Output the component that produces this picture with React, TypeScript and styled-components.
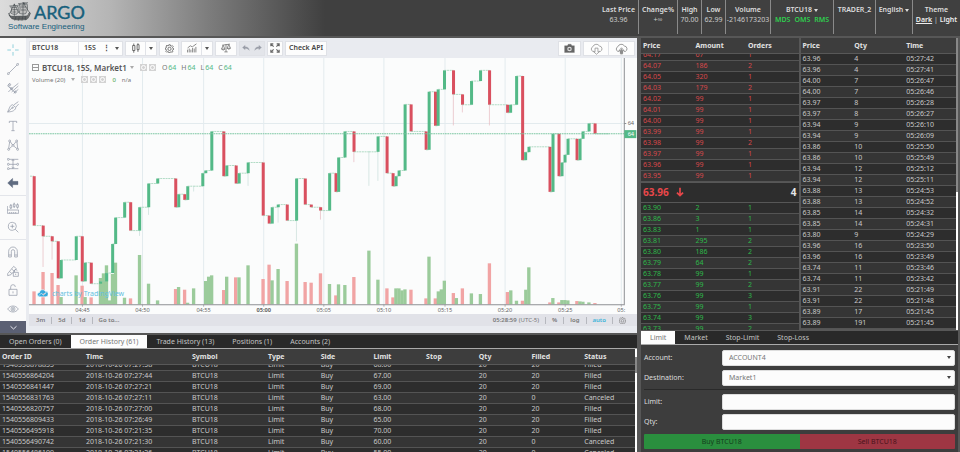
import React, { useLayoutEffect, useRef } from "react";
import styled, { createGlobalStyle, css } from "styled-components";

const Global = createGlobalStyle`
  * { box-sizing: border-box; }
  body { margin: 0; background: #555; }
  button, input, select, table { font: inherit; color: inherit; }
  button { border: 0; background: none; padding: 0; cursor: pointer; }
`;

const App_ = styled.div`
  display: flex;
  flex-direction: column;
  height: 100vh;
  background: #575757;
  color: #ddd;
  font: 7px/10px "Noto Sans", "Open Sans", sans-serif;
`;

/* ---------- header ---------- */

const Header = styled.header`
  display: flex;
  justify-content: space-between;
  height: 36px;
  flex: none;
  background: linear-gradient(90deg, #dcdcdc 0, #b5b5b5 110px, #7c7c7c 210px, #404040 325px);
`;

const Brand = styled.a`
  display: grid;
  grid-template-columns: 26px auto;
  align-content: start;
  padding: 2px 8px;
  color: #17607c;
  text-decoration: none;
  white-space: nowrap;
`;

const BrandName = styled.span`
  font: 18px/20px Lato, sans-serif;
  -webkit-text-stroke: 0.4px #17607c;
`;

const BrandLine = styled.span`
  grid-column: 1 / -1;
  font: 8px/9px "Liberation Sans", Arial, sans-serif;
`;

const Stats = styled.div`
  display: flex;
  height: 34px;
`;

const Stat = styled.div<{ $w: number }>`
  display: flex;
  flex-direction: column;
  align-items: center;
  width: ${(p) => p.$w}px;
  padding-top: 5px;
  color: #ccc;
  white-space: nowrap;
  & + & { border-left: 1px solid #8a8a8a; }
`;

const StatName = styled.strong`
  color: #ddd;
  font-weight: 600;
`;

const Services = styled.span`
  display: flex;
  gap: 4px;
  color: #2fd04f;
  font-weight: 600;
`;

const MenuButton = styled.button`
  display: flex;
  align-items: center;
  gap: 2px;
  color: #ddd;
  font-weight: 600;
`;

const Caret = styled.i<{ $tone?: string }>`
  width: 0;
  height: 0;
  border: 2px solid transparent;
  border-top: 3px solid ${(p) => p.$tone ?? "#ddd"};
  border-bottom: 0;
`;

const ThemeButton = styled.button<{ $on?: boolean }>`
  font-weight: 600;
  color: #eee;
  text-decoration: ${(p) => (p.$on ? "underline" : "none")};
`;

/* ---------- frame ---------- */

const Main = styled.main`
  flex: 1;
  min-height: 0;
  display: grid;
  grid-template-columns: minmax(0, 638fr) minmax(0, 322fr);
  padding-top: 2px;
`;

const Left = styled.div`
  display: flex;
  flex-direction: column;
  gap: 2px;
  min-height: 0;
  margin-right: 1px;
`;

const Right = styled.div`
  display: flex;
  flex-direction: column;
  gap: 1px;
  min-height: 0;
  padding: 0 2px 0 3px;
`;

/* ---------- chart panel ---------- */

const ChartPanel = styled.section`
  display: grid;
  grid-template-columns: 29px minmax(0, 1fr);
  flex: none;
  background: #e9ebf0;
  color: #4c525e;
`;

const ToolRail = styled.div`
  display: flex;
  flex-direction: column;
  justify-content: space-between;
  width: 26px;
  background: #fbfbfb;
`;

const ToolGroup = styled.div`
  display: flex;
  flex-direction: column;
  align-items: center;
  gap: 7px;
  padding: 6px 0;
  & + & { border-top: 1px solid #e3e5ea; }
`;

const ToolButton = styled.button`
  width: 12px;
  height: 12px;
  svg { display: block; }
`;

const RailToggle = styled.button`
  height: 12px;
  display: flex;
  align-items: center;
  justify-content: center;
  background: #5b6073;
`;

const Toolbar = styled.div`
  display: flex;
  align-items: center;
  gap: 2px;
  height: 20px;
  padding: 0 2px 0 0;
`;

const ButtonSet = styled.div<{ $muted?: boolean }>`
  display: flex;
  height: 15px;
  border: 1px solid #dfe1e6;
  background: ${(p) => (p.$muted ? "#e3e5ea" : "#fdfdfd")};
`;

const BarButton = styled.button<{ $w: number; $start?: boolean; $line?: boolean }>`
  display: flex;
  align-items: center;
  justify-content: ${(p) => (p.$start ? "flex-start" : "center")};
  width: ${(p) => p.$w}px;
  padding: 0 2px;
  font-weight: 600;
  color: #444;
  white-space: nowrap;
  ${(p) => p.$line && css`border-right: 1px solid #e1e3e8;`}
`;

const Push = styled.div`
  flex: 1;
`;

const Plot = styled.div`
  position: relative;
  margin-right: 0;
  background: #fbfcfc;
  svg.plot { display: block; width: 100%; height: auto; }
`;

const Legend = styled.div`
  position: absolute;
  left: 3px;
  top: 4px;
  display: grid;
  gap: 1px;
`;

const LegendRow = styled.div`
  display: flex;
  align-items: center;
  gap: 3px;
  height: 11px;
  white-space: nowrap;
`;

const Collapse = styled.button`
  width: 7px;
  height: 7px;
  border: 1px solid #999;
  display: flex;
  align-items: center;
  &::after { content: ""; flex: 1; height: 1px; background: #999; }
`;

const Symbol = styled.strong`
  font-size: 8px;
  font-weight: 600;
  color: #555;
`;

const Chips = styled.span`
  display: flex;
  gap: 2px;
  margin: 0 3px;
`;

const Chip = styled.button`
  width: 7px;
  height: 7px;
  background: #d3d3d3;
  display: flex;
  align-items: center;
  justify-content: center;
  &::after { content: ""; width: 3px; height: 3px; border: 1px solid #fff; border-radius: 50%; }
`;

const Ohlc = styled.span`
  margin-right: 2px;
  color: #777;
  b { color: #53b987; font-weight: 400; margin-left: 1px; }
`;

const Small = styled.span<{ $tone?: string }>`
  font-size: 6px;
  margin-right: 3px;
  color: ${(p) => p.$tone ?? "#777"};
`;

const Watermark = styled.a`
  position: absolute;
  left: 8px;
  bottom: 15px;
  display: flex;
  align-items: center;
  gap: 4px;
  color: #62bfdf;
  text-decoration: none;
`;

const RangeBar = styled.div`
  display: flex;
  align-items: center;
  height: 12px;
  padding: 0 5px 0 1px;
  background: #e1e2e8;
  font-size: 6px;
`;

const RangeButton = styled.button<{ $active?: boolean }>`
  display: flex;
  align-items: center;
  justify-content: center;
  height: 7px;
  line-height: 7px;
  padding: 0 6px;
  font-weight: 600;
  color: ${(p) => (p.$active ? "#3bb3d8" : "#777")};
  & + & { border-left: 1px solid #b6b8be; }
`;

const Clock = styled(RangeButton)`
  span { font-weight: 400; margin-left: 2px; }
`;

/* ---------- tables ---------- */

const Panel = styled.section<{ $grow?: boolean; $basis?: number }>`
  display: flex;
  flex-direction: column;
  min-height: 0;
  min-width: 0;
  flex: ${(p) => (p.$grow ? `1 1 ${p.$basis ?? 0}px` : "none")};
`;

const Tabs = styled.div`
  display: flex;
  flex: none;
  height: 14px;
  background: #292929;
  border-bottom: 1px solid #aaa;
`;

const Tab = styled.button<{ $on?: boolean }>`
  padding: 0 9px;
  white-space: nowrap;
  color: ${(p) => (p.$on ? "#777" : "#c4c4c4")};
  background: ${(p) => (p.$on ? "#fdfdfd" : "none")};
`;

const ScrollRow = styled.div`
  display: flex;
  flex: 1;
  min-height: 0;
`;

const Viewport = styled.div`
  flex: 1;
  min-width: 0;
  overflow: hidden;
`;

const Track = styled.div<{ $thumb: string; $bar: string }>`
  width: 2px;
  flex: none;
  background: linear-gradient(${(p) => p.$bar}) #fff;
`;

const Table = styled.table<{ $tone?: string }>`
  width: 100%;
  table-layout: fixed;
  border-collapse: separate;
  border-spacing: 0;
  text-align: left;
  white-space: nowrap;
  color: ${(p) => p.$tone ?? "#c9c9c9"};
  th {
    position: sticky;
    top: 0;
    height: 16px;
    padding: 0 2px;
    background: #3d3d3d;
    border-bottom: 1px solid #585858;
    color: #e2e2e2;
    font-weight: 700;
  }
  td {
    height: 11px;
    line-height: 10px;
    padding: 0 2px;
    border-bottom: 1px solid #545454;
    background: #2d2d2d;
  }
  tr:nth-child(even) td { background: #353535; }
`;

const Col = styled.col<{ $w: number }>`
  width: ${(p) => p.$w}px;
`;

type GridProps = {
  label: string;
  head?: string[];
  rows: string[][];
  widths?: number[];
  scroll?: number;
  tone?: string;
};

function DataGrid({ label, head, rows, widths, scroll = 0, tone }: GridProps) {
  const ref = useRef<HTMLDivElement>(null);
  useLayoutEffect(() => {
    if (ref.current) ref.current.scrollTop = scroll;
  }, [scroll]);
  return (
    <Viewport ref={ref}>
      <Table $tone={tone} aria-label={label}>
        {widths && (
          <colgroup>
            {widths.map((w, i) => <Col key={i} $w={w} />)}
          </colgroup>
        )}
        {head && (
          <thead>
            <tr>{head.map((h) => <th key={h} scope="col">{h}</th>)}</tr>
          </thead>
        )}
        <tbody>
          {rows.map((r, i) => (
            <tr key={i}>{r.map((c, j) => <td key={j}>{c}</td>)}</tr>
          ))}
        </tbody>
      </Table>
    </Viewport>
  );
}

const Books = styled.div`
  flex: 1;
  min-height: 0;
  display: grid;
  grid-template-columns: minmax(0, 1fr) minmax(0, 1fr);
  grid-template-rows: minmax(0, 1fr);
  gap: 2px;
`;

const LastTrade = styled.div`
  display: flex;
  align-items: center;
  flex: none;
  gap: 6px;
  height: 19px;
  margin: 1px 0;
  padding: 0 2px;
  background: #2d2d2d;
  font-size: 10px;
  font-weight: 700;
  color: #e8474a;
  span { margin-left: auto; color: #e6e6e6; }
`;

/* ---------- order form ---------- */

const Form = styled.form`
  display: flex;
  flex-direction: column;
  gap: 4px;
  padding: 5px 3px 3px;
  background: #3d3d3d;
`;

const Field = styled.div`
  display: grid;
  grid-template-columns: 78px minmax(0, 1fr);
  align-items: center;
  position: relative;
  height: 16px;
`;

const box = css`
  width: 100%;
  height: 16px;
  padding: 0 6px;
  border: 1px solid #ddd;
  border-radius: 2px;
  background: #fcfcfc;
  color: #777;
`;

const Select = styled.select`
  ${box}
  appearance: none;
`;

const Input = styled.input`
  ${box}
`;

const SelectCaret = styled(Caret)`
  position: absolute;
  right: 4px;
  top: 6px;
  pointer-events: none;
`;

const Rule = styled.hr`
  width: 100%;
  height: 1px;
  margin: -1px 0 0;
  border: 0;
  background: #2a2a2a;
`;

const Actions = styled.div`
  display: grid;
  grid-template-columns: 1fr 1fr;
  border-radius: 1px;
  overflow: hidden;
`;

const Action = styled.button<{ $tone: string; $ink: string }>`
  height: 15px;
  background: ${(p) => p.$tone};
  color: ${(p) => p.$ink};
`;

/* ---------- icons ---------- */

function Glyph({ d, color = "#8b93a1", w = 2, size = 12, fill = "none" }: { d: string; color?: string; w?: number; size?: number; fill?: string }) {
  return (
    <svg width={size} height={size} viewBox="0 0 36 36" fill={fill} stroke={color} strokeWidth={w} aria-hidden>
      <path d={d} />
    </svg>
  );
}

const dot = (x: number, y: number, r = 3) => `M${x - r} ${y}a${r} ${r} 0 1 0 ${2 * r} 0a${r} ${r} 0 1 0 ${-2 * r} 0`;

const tools: { name: string; d: string; color?: string; w?: number; fill?: string }[][] = [
  [
    { name: "Cross", d: "M18 1v11M18 24v11M1 18h11M24 18h11", color: "#5bbccb" },
    { name: "Trend line", d: `${dot(4, 32)}${dot(32, 4)}M6 30L30 6` },
    { name: "Pitchfork", d: `M8 4L2 12L14 20L34 4M14 20L4 30M14 30L34 12M20 34L34 22M6 14L24 32${dot(8, 8)}${dot(25, 30)}${dot(14, 20)}` },
    { name: "Brush", d: `M2 33C8 20 8 14 16 11L27 20C22 32 12 32 2 33ZM2 33L16 20${dot(17, 20, 2)}M20 12L34 2M27 18L35 9` },
    { name: "Text", d: "M7 9V4H29V9M18 4V32M13 32H23" },
    { name: "Pattern", d: `${dot(5, 31)}${dot(8, 6)}${dot(18, 19)}${dot(29, 6)}${dot(32, 31)}M5 28L8 9M10 8L16 17M20 17L27 8M30 9L32 28M7 29L16 21M20 21L30 29` },
    { name: "Forecast", d: `${dot(4, 4)}${dot(4, 19)}${dot(4, 32)}${dot(32, 19)}M7 4H34M7 19H29M7 32H34M18 4V32M14 9L18 5L22 9M14 27L18 31L22 27` },
    { name: "Hide drawings", d: "M2 18L17 4V13H33V23H17V32Z", color: "#5f6b80", fill: "#5f6b80", w: 1 },
  ],
  [
    { name: "Measure", d: "M1 12V34H35V24H1M8 34V30M14 34V30M20 34V30M26 34V30M9 10H14V18H9ZM11.500 6V10M11.500 18V21M19 6H24V14H19ZM21.500 2V6M21.500 14V18M29 8H34V16H29ZM31.500 4V8M31.500 16V20" },
    { name: "Zoom in", d: `${dot(16, 16, 12)}M25 25L34 34M10 16H22M16 10V22` },
  ],
  [
    { name: "Magnet", d: "M5 33V16A13 13 0 0 1 31 16V33H23V16A5 5 0 0 0 13 16V33ZM5 27H13M23 27H31" },
    { name: "Stay in drawing mode", d: "M2 26L20 4L28 11L12 29L2 32ZM8 20L15 26M14 12L22 19M19 22H34V34H19ZM22 22V18A4 4 0 0 1 30 17M26 26V30" },
    { name: "Lock", d: "M6 16H30V34H6ZM11 16V9A7 7 0 0 1 25 9M18 22V28" },
    { name: "Show all", d: `M2 18C10 6 26 6 34 18C26 30 10 30 2 18Z${dot(18, 18, 6)}${dot(18, 18, 2)}` },
  ],
];

const gear = "M15 3H21L22 8L25 9L29 6L33 11L30 14L31 17L35 18V22L31 23L30 26L32 30L28 33L24 31L21 32L20 35H15L14 31L11 30L7 33L3 29L6 25L5 22L1 21V16L5 15L6 12L4 8L8 5L12 8L14 7ZM18 13A6 6 0 1 0 18 26A6 6 0 1 0 18 13Z";

function Ship() {
  return (
    <svg width="23" height="19" viewBox="0 0 69 57" fill="none" stroke="#3d4347" strokeWidth="1.700" aria-hidden>
      <path d="M3 39C10 44 14 43 20 43L55 42C60 40 63 36 67 33C65 41 62 47 57 52C40 55 22 55 11 50Z" fill="#777" />
      <path d="M8 14C16 18 24 17 30 13C32 22 31 29 27 36C20 38 13 37 8 33C12 27 12 21 8 14Z" fill="#c9c9c9" />
      <path d="M33 7C41 10 50 9 57 5C60 15 59 26 53 35C45 37 38 36 33 33C37 24 37 15 33 7Z" fill="#bdbdbd" />
      <path d="M19 5V43M45 1V42M4 12L32 10M30 5L60 2M19 6L3 38M45 2L66 34M19 6L33 33M38 15H55M39 24H54M13 23H28M13 30H25M7 45H60M12 49H56M24 44L20 56M34 44L31 56M44 44L42 56M52 43L52 55M1 33L8 45M60 36L66 30M45 2L52 4L45 5" />
    </svg>
  );
}

/* ---------- chart ---------- */

/* [x, close, low?] in chart units; each candle opens at the previous close */
const candles: [number, number, number?][] = [
  [102, 676], [129, 708, 800], [156, 723, 778], [174, 834], [183, 779], [228, 708], [246, 843], [255, 787],
  [273, 850], [301, 843], [319, 818], [337, 731], [346, 652], [373, 606], [391, 691], [418, 621, 707],
  [445, 550, 644], [472, 535], [526, 621], [535, 582], [553, 599], [562, 558], [580, 558, 574], [607, 519],
  [616, 511], [634, 394], [670, 528], [679, 496], [707, 550], [716, 519], [743, 487, 557], [788, 646],
  [806, 670], [815, 621], [833, 613, 667], [860, 661], [888, 535, 723], [914, 613], [932, 621], [960, 631, 658],
  [987, 519], [1006, 575], [1014, 472], [1033, 394], [1060, 455, 486], [1105, 455, 557], [1132, 409, 542],
  [1159, 519], [1177, 558], [1186, 528], [1195, 511], [1213, 313], [1231, 394], [1276, 449], [1285, 275],
  [1304, 377], [1312, 268], [1331, 211], [1358, 283, 376], [1385, 314, 337], [1412, 243], [1439, 211],
  [1466, 314, 376], [1520, 338], [1529, 314], [1547, 228], [1565, 480], [1574, 456], [1584, 440], [1647, 575],
  [1656, 401], [1674, 528], [1683, 487], [1692, 464], [1701, 416], [1728, 480], [1737, 416], [1746, 394],
  [1764, 370], [1782, 401],
];

/* volume bars: [x, top] */
const volDown: [number, number][] = [
  [102, 873], [129, 815], [156, 818], [174, 854], [246, 856], [273, 891], [391, 894], [526, 866], [553, 868],
  [670, 869], [706, 831], [788, 836], [806, 793], [860, 842], [914, 845], [932, 847], [960, 819], [1006, 885],
  [1060, 830], [1159, 864], [1177, 891], [1231, 868], [1276, 894], [1304, 894], [1358, 878], [1385, 864],
  [1466, 789], [1520, 875], [1565, 901], [1647, 906], [1674, 906], [1728, 902], [1782, 908],
];
const volUp: [number, number][] = [
  [183, 890], [228, 825], [255, 890], [301, 833], [310, 819], [319, 795], [328, 900], [337, 821], [346, 787],
  [373, 892], [418, 764], [445, 850], [472, 900], [535, 860], [562, 907], [580, 864], [616, 842], [625, 829],
  [634, 825], [679, 829], [716, 831], [743, 795], [815, 840], [833, 806], [888, 730], [987, 851], [1014, 852],
  [1033, 854], [1105, 751], [1132, 838], [1186, 864], [1195, 864], [1204, 870], [1213, 867], [1285, 769],
  [1313, 873], [1322, 867], [1331, 841], [1367, 893], [1412, 879], [1439, 881], [1530, 870], [1547, 901],
  [1575, 868], [1584, 801], [1656, 893], [1683, 899], [1692, 899], [1701, 900], [1737, 903], [1746, 904], [1764, 906],
];

const times: [number, string][] = [
  [247, "04:45"], [427, "04:50"], [610, "04:55"], [790, "05:00"], [970, "05:05"], [1150, "05:10"],
  [1333, "05:15"], [1513, "05:20"], [1693, "05:25"], [1861, "05:"],
];

function Chart() {
  const steps: React.ReactNode[] = [];
  let open = 528;
  let prevX = 90;
  candles.forEach(([x, close, low]) => {
    const up = close <= open;
    const tone = up ? "#53b987" : "#d9505f";
    steps.push(
      <g key={x}>
        <path d={`M${prevX} ${open}H${x}`} stroke="#8ccbaa" strokeWidth="2" strokeDasharray="6 2" />
        {low && <path d={`M${x} ${Math.min(open, close)}V${low}`} stroke={up ? "#c5dcd8" : "#e6b5bd"} strokeWidth="2" />}
        {close !== open && <rect x={x - 4} y={Math.min(open, close)} width="9" height={Math.abs(close - open)} fill={tone} />}
      </g>
    );
    open = close;
    prevX = x;
  });
  return (
    <svg className="plot" viewBox="87 174 1821 768" fontFamily="Noto Sans, sans-serif" fontSize="17" fill="#666" role="img" aria-label="BTCU18 price and volume">
      <g stroke="#e3ebee" strokeWidth="3">
        {times.map(([x]) => <path key={x} d={`M${x} 174V913`} />)}
        <path d="M87 370H1870" />
      </g>
      <g fill="#f1a4a4">{volDown.map(([x, y]) => <rect key={x} x={x - 5} y={y} width="10" height={912 - y} />)}</g>
      <g fill="#9bcb9b">{volUp.map(([x, y]) => <rect key={x} x={x - 5} y={y} width="10" height={912 - y} />)}</g>
      {steps}
      <path d="M1782 401H1825" stroke="#8ccbaa" strokeWidth="2" />
      <path d="M87 401H1870" stroke="#7cc6a2" strokeWidth="3" strokeDasharray="5 2" />
      <path d="M87 913H1870V174M1870 370H1876" stroke="#8e9094" strokeWidth="3" fill="none" />
      <text x="1880" y="376">64</text>
      <rect x="1870" y="390" width="36" height="24" fill="#53b987" />
      <text x="1880" y="408" fill="#fff">64</text>
      {times.map(([x, t]) => (
        <g key={t}>
          <path d={`M${x} 913V919`} stroke="#8e9094" strokeWidth="2" />
          <text x={x} y="935" textAnchor="middle" fontWeight={t === "05:00" ? 700 : 400}>{t}</text>
        </g>
      ))}
    </svg>
  );
}

/* ---------- data ---------- */

const split = (s: string) => s.split("|").map((r) => r.trim().split(" "));

const asks = split("64.17 67 1|64.07 186 2|64.05 320 1|64.03 179 2|64.02 99 1|64.01 99 1|64.00 99 1|63.99 99 1|63.98 99 2|63.97 99 1|63.96 99 1|63.95 99 1");
const bids = split("63.90 2 1|63.86 3 1|63.83 1 1|63.81 295 2|63.80 186 2|63.79 64 2|63.78 99 1|63.77 99 2|63.76 99 3|63.75 99 1|63.74 99 3|63.73 99 2");
const trades = split("63.96 4 05:27:42|63.96 4 05:27:41|64.00 7 05:26:47|64.00 7 05:26:46|63.97 8 05:26:28|63.97 8 05:26:27|63.94 9 05:26:10|63.94 9 05:26:09|63.86 10 05:25:50|63.86 10 05:25:49|63.94 12 05:25:12|63.94 12 05:25:11|63.88 13 05:24:53|63.88 13 05:24:52|63.85 14 05:24:32|63.85 14 05:24:31|63.80 9 05:24:29|63.96 16 05:23:50|63.96 16 05:23:49|63.74 11 05:23:46|63.74 11 05:23:42|63.91 22 05:21:49|63.91 22 05:21:48|63.89 17 05:21:45|63.89 191 05:21:45");

const orders = split("1540556878855 07:27:58 68.00 20 Filled|1540556864204 07:27:44 67.00 20 Filled|1540556841447 07:27:21 69.00 20 Filled|1540556831763 07:27:11 63.00 0 Canceled|1540556820757 07:27:00 68.00 20 Filled|1540556809433 07:26:49 65.00 20 Filled|1540556495918 07:21:35 70.00 20 Filled|1540556490742 07:21:30 60.00 0 Canceled|1540556486199 07:21:26 55.00 0 Canceled")
  .map(([id, time, limit, filled, status]) => [id, `2018-10-26 ${time}`, "BTCU18", "Limit", "Buy", limit, "", "20", filled, status]);

const orderHead = ["Order ID", "Time", "Symbol", "Type", "Side", "Limit", "Stop", "Qty", "Filled", "Status"];

export default function App() {
  return (
    <App_>
      <Global />
      <Header>
        <Brand href="#">
          <Ship />
          <BrandName>ARGO</BrandName>
          <BrandLine>Software Engineering</BrandLine>
        </Brand>
        <Stats>
          <Stat $w={39}><StatName>Last Price</StatName>63.96</Stat>
          <Stat $w={39}><StatName>Change%</StatName>+∞</Stat>
          <Stat $w={24}><StatName>High</StatName>70.00</Stat>
          <Stat $w={24}><StatName>Low</StatName>62.99</Stat>
          <Stat $w={45}><StatName>Volume</StatName>-2146173203</Stat>
          <Stat $w={63}>
            <MenuButton>BTCU18<Caret /></MenuButton>
            <Services><span>MDS</span><span>OMS</span><span>RMS</span></Services>
          </Stat>
          <Stat $w={42}><StatName>TRADER_2</StatName></Stat>
          <Stat $w={37}><MenuButton>English<Caret /></MenuButton></Stat>
          <Stat $w={48}>
            <StatName>Theme</StatName>
            <span><ThemeButton $on>Dark</ThemeButton> | <ThemeButton>Light</ThemeButton></span>
          </Stat>
        </Stats>
      </Header>

      <Main>
        <Left>
          <ChartPanel>
            <ToolRail>
              <div>
                {tools.map((g, i) => (
                  <ToolGroup key={i}>
                    {g.map(({ name, ...icon }) => (
                      <ToolButton key={name} aria-label={name}><Glyph {...icon} /></ToolButton>
                    ))}
                  </ToolGroup>
                ))}
              </div>
              <RailToggle aria-label="Collapse tools"><Glyph d="M6 13L18 24L30 13" color="#e6e6ee" w={4} size={9} /></RailToggle>
            </ToolRail>
            <div>
              <Toolbar>
                <ButtonSet>
                  <BarButton $w={49} $start $line>BTCU18</BarButton>
                  <BarButton $w={22}>15S</BarButton>
                  <BarButton $w={11} aria-label="More">⋮</BarButton>
                  <BarButton $w={10} aria-label="Intervals"><Caret $tone="#555" /></BarButton>
                </ButtonSet>
                <ButtonSet>
                  <BarButton $w={20} $line aria-label="Candles"><Glyph d="M6 9H14V27H6ZM10 2V9M10 27V35M22 6H29V24H22ZM25 1V6M25 24V32" color="#555" w={3} size={10} /></BarButton>
                  <BarButton $w={10} aria-label="Styles"><Caret $tone="#555" /></BarButton>
                </ButtonSet>
                <ButtonSet><BarButton $w={18} aria-label="Settings"><Glyph d={gear} color="#555" w={3} size={9} /></BarButton></ButtonSet>
                <ButtonSet>
                  <BarButton $w={20} $line aria-label="Indicators"><Glyph d="M2 34V24M8 34V20M14 34V24M20 34V18M26 34V20M32 34V14M2 18L12 10L19 14L34 3" color="#777" w={3} size={10} /></BarButton>
                  <BarButton $w={10} aria-label="Indicator list"><Caret $tone="#555" /></BarButton>
                </ButtonSet>
                <ButtonSet><BarButton $w={20} aria-label="Compare"><Glyph d="M4 8L32 4M18 4V32M12 32H24M8 8L2 22H14ZM28 5L22 19H34ZM2 22Q8 29 14 22M22 19Q28 26 34 19" color="#777" w={3} size={10} /></BarButton></ButtonSet>
                <ButtonSet $muted>
                  <BarButton $w={12} aria-label="Undo"><Glyph d="M2 16L14 6V12C26 12 32 18 33 29C28 22 22 20 14 20V26Z" color="#9a9ea8" fill="#9a9ea8" w={1} size={8} /></BarButton>
                  <BarButton $w={12} aria-label="Redo"><Glyph d="M34 16L22 6V12C10 12 4 18 3 29C8 22 14 20 22 20V26Z" color="#9a9ea8" fill="#9a9ea8" w={1} size={8} /></BarButton>
                </ButtonSet>
                <ButtonSet><BarButton $w={14} aria-label="Full screen"><Glyph d="M3 12V3H12M3 3L13 13M24 3H33V12M33 3L23 13M3 24V33H12M3 33L13 23M24 33H33V24M33 33L23 23" color="#666" w={4} size={10} /></BarButton></ButtonSet>
                <ButtonSet><BarButton $w={40}>Check API</BarButton></ButtonSet>
                <Push />
                <ButtonSet><BarButton $w={21} aria-label="Snapshot"><Glyph d="M2 9H11L14 4H23L26 9H34V31H2ZM18 12A7 7 0 1 0 18 27A7 7 0 1 0 18 12ZM18 16A3 3 0 1 1 18 23A3 3 0 1 1 18 16Z" color="#666" fill="#666" w={1} size={11} /></BarButton></ButtonSet>
                <ButtonSet>
                  <BarButton $w={25} $line aria-label="Load"><Glyph d="M12 26H8A7 7 0 0 1 8 13A10 10 0 0 1 26 11A8 8 0 0 1 29 26H25M14 17H22V27H26L18 34L10 27H14Z" color="#888" size={13} /></BarButton>
                  <BarButton $w={25} aria-label="Save"><Glyph d="M12 26H8A7 7 0 0 1 8 13A10 10 0 0 1 26 11A8 8 0 0 1 29 26H25M15 33V24H11L18 16L25 24H21V33ZM16 31V22M18 33V19M20 31V22" color="#777" size={13} /></BarButton>
                </ButtonSet>
              </Toolbar>
              <Plot>
                <Chart />
                <Legend>
                  <LegendRow>
                    <Collapse aria-label="Collapse legend" />
                    <Symbol>BTCU18, 15S, Market1</Symbol>
                    <Caret $tone="#aaa" />
                    <Chips><Chip aria-label="Hide" /><Chip aria-label="Format" /></Chips>
                    <Ohlc>O<b>64</b></Ohlc><Ohlc>H<b>64</b></Ohlc><Ohlc>L<b>64</b></Ohlc><Ohlc>C<b>64</b></Ohlc>
                  </LegendRow>
                  <LegendRow>
                    <Small>Volume (20)</Small>
                    <Caret $tone="#aaa" />
                    <Chips><Chip aria-label="Hide volume" /><Chip aria-label="Format volume" /><Chip aria-label="Remove volume" /></Chips>
                    <Small $tone="#3a9b3a">0</Small><Small>n/a</Small>
                  </LegendRow>
                </Legend>
                <Watermark href="#">
                  <Glyph d="M8 29A7 7 0 0 1 8 15A10 10 0 0 1 27 11A9 9 0 0 1 29 29ZM5 26L14 17L21 23L31 14" color="#fff" fill="#35a9dc" w={2} size={11} />
                  charts by TradingView
                </Watermark>
              </Plot>
              <RangeBar>
                <RangeButton>3m</RangeButton><RangeButton>5d</RangeButton><RangeButton>1d</RangeButton><RangeButton>Go to...</RangeButton>
                <Push />
                <Clock>05:28:59 <span>(UTC-5)</span></Clock><RangeButton>%</RangeButton><RangeButton>log</RangeButton><RangeButton $active>auto</RangeButton>
                <RangeButton aria-label="Chart settings"><Glyph d={gear} color="#777" w={3} size={7} /></RangeButton>
              </RangeBar>
            </div>
          </ChartPanel>

          <Panel $grow>
            <Tabs role="tablist">
              <Tab>Open Orders (0)</Tab><Tab $on>Order History (61)</Tab><Tab>Trade History (13)</Tab><Tab>Positions (1)</Tab><Tab>Accounts (2)</Tab>
            </Tabs>
            <ScrollRow>
              <DataGrid label="Order history" head={orderHead} rows={orders} widths={[84, 106, 76]} scroll={5} />
              <Track $thumb="" $bar="#fff 8px, #888 8px, #888 24px, #fff 24px" />
            </ScrollRow>
          </Panel>
        </Left>

        <Right>
          <Books>
            <Panel $grow>
              <Panel $grow $basis={16}>
                <ScrollRow><DataGrid label="Asks" head={["Price", "Amount", "Orders"]} rows={asks} scroll={4} tone="#d8484b" /></ScrollRow>
              </Panel>
              <LastTrade>
                63.96
                <Glyph d="M18 3V31M7 20L18 31L29 20" color="#e8474a" w={6} size={10} />
                <span>4</span>
              </LastTrade>
              <Panel $grow>
                <ScrollRow><DataGrid label="Bids" rows={bids} tone="#2db84a" /></ScrollRow>
              </Panel>
            </Panel>
            <Panel $grow>
              <ScrollRow>
                <DataGrid label="Trades" head={["Price", "Qty", "Time"]} rows={trades} />
                <Track $thumb="" $bar="#888 154px, #fff 154px" />
              </ScrollRow>
            </Panel>
          </Books>
          <Panel>
            <Tabs role="tablist">
              <Tab $on>Limit</Tab><Tab>Market</Tab><Tab>Stop-Limit</Tab><Tab>Stop-Loss</Tab>
            </Tabs>
            <Form onSubmit={(e) => e.preventDefault()}>
              <Field>
                <label htmlFor="account">Account:</label>
                <Select id="account" defaultValue="ACCOUNT4"><option>ACCOUNT4</option></Select>
                <SelectCaret $tone="#444" />
              </Field>
              <Field>
                <label htmlFor="destination">Destination:</label>
                <Select id="destination" defaultValue="Market1"><option>Market1</option></Select>
                <SelectCaret $tone="#444" />
              </Field>
              <Rule />
              <Field><label htmlFor="limit">Limit:</label><Input id="limit" /></Field>
              <Field><label htmlFor="qty">Qty:</label><Input id="qty" /></Field>
              <Actions>
                <Action type="button" $tone="#2a8f3e" $ink="#14401d">Buy BTCU18</Action>
                <Action type="button" $tone="#9e3643" $ink="#4a141b">Sell BTCU18</Action>
              </Actions>
            </Form>
          </Panel>
        </Right>
      </Main>
    </App_>
  );
}
